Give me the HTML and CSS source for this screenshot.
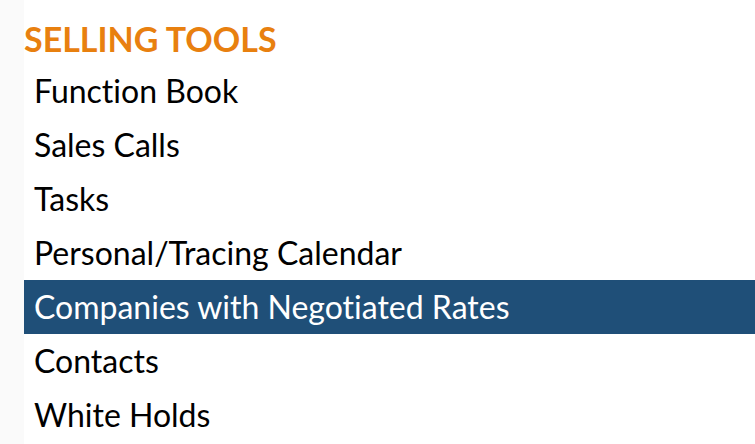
FILE: index.html
```html
<!DOCTYPE html>
<html lang="en">
<head>
  <meta charset="UTF-8" />
  <meta name="viewport" content="width=device-width, initial-scale=1.0" />
  <title>Selling Tools</title>
  <link rel="stylesheet" href="styles.css">
</head>
<body>
  <div class="panel">
    <h2 class="panel-title">SELLING TOOLS</h2>
    <ul class="menu">
      <li><a href="#">Function Book</a></li>
      <li><a href="#">Sales Calls</a></li>
      <li><a href="#">Tasks</a></li>
      <li><a href="#">Personal/Tracing Calendar</a></li>
      <li class="active"><a href="#">Companies with Negotiated Rates</a></li>
      <li><a href="#">Contacts</a></li>
      <li><a href="#">White Holds</a></li>
    </ul>
  </div>
</body>
</html>
```

FILE: styles.css
```css
:root {
  --orange: #e8800f;
  --blue: #1f4f78;
}
body {
  margin: 0;
  background: #fafafa;
  font-family: Lato, 'Open Sans', sans-serif;
  font-variant-ligatures: none;
}
.panel {
  margin-left: 24px;
  background: white;
  min-height: 444px;
}
.panel-title {
  margin: 0;
  padding-top: 19px;
  height: 64px;
  box-sizing: border-box;
  font-size: 34px;
  font-weight: bold;
  line-height: 40px;
  color: var(--orange);
}
.menu {
  list-style: none;
  margin: 0;
  padding: 0;
}
.menu li a {
  display: block;
  height: 54px;
  line-height: 54px;
  padding-left: 10px;
  font-size: 32px;
  color: #000;
  text-decoration: none;
}
.menu li.active a {
  background: var(--blue);
  color: white;
}
```
